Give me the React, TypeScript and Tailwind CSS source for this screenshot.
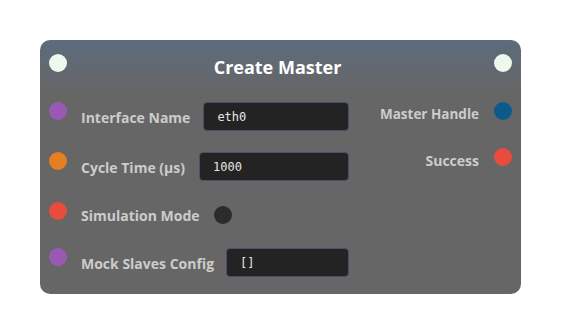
import React from "react"

const labelFont = { fontFamily: '"Open Sans", "Liberation Sans", Arial, sans-serif' }
const monoFont = { fontFamily: '"DejaVu Sans Mono", "Liberation Mono", monospace' }

function Dot({ color }: { color: string }) {
  return <div className={`w-[18px] h-[18px] rounded-full shrink-0 ${color}`} />
}

function TextInput({ value }: { value: string }) {
  return (
    <div
      className="flex-1 h-[29px] flex items-center pl-[13px] rounded-[4px] bg-[#232323] border border-[#44546a] text-[12px] text-[#e6e6e6]"
      style={monoFont}
    >
      {value}
    </div>
  )
}

export default function App() {
  return (
    <div className="w-[561px] h-[334px] bg-white pt-[40px] pl-[40px]" style={labelFont}>
      <div className="w-[481px] h-[254px] rounded-[10px] bg-[linear-gradient(to_bottom,#5d6b7d,#666666_52px)] pt-[14px] px-[9px]">
        {/* header */}
        <div className="flex items-start h-[18px]">
          <Dot color="bg-[#eef8ec]" />
          <div className="flex-1 text-center text-[18px] leading-[18px] font-bold text-white pt-[4px] pr-[6px]">
            Create Master
          </div>
          <Dot color="bg-[#eef8ec]" />
        </div>

        {/* slots */}
        <div className="flex mt-[30px]">
          <div className="w-[300px] flex flex-col">
            <div className="flex items-start gap-[14px]">
              <Dot color="bg-[#9b59b6]" />
              <div className="flex-1 flex items-center gap-[13px] h-[29px]">
                <span className="text-[14px] leading-[18px] font-bold text-[#cccccc] pt-[3px]">Interface Name</span>
                <TextInput value="eth0" />
              </div>
            </div>
            <div className="flex items-start gap-[14px] mt-[21px]">
              <Dot color="bg-[#e67e22]" />
              <div className="flex-1 flex items-center gap-[14px] h-[29px]">
                <span className="text-[14px] leading-[18px] font-bold text-[#cccccc] pt-[3px]">Cycle Time (µs)</span>
                <TextInput value="1000" />
              </div>
            </div>
            <div className="flex items-start gap-[14px] mt-[21px]">
              <Dot color="bg-[#e74c3c]" />
              <div className="flex-1 flex items-center gap-[14px] h-[26px]">
                <span className="text-[14px] leading-[18px] font-bold text-[#cccccc] pt-[2px]">Simulation Mode</span>
                <div className="w-[18px] h-[18px] rounded-full bg-[#2b2b2b]" />
              </div>
            </div>
            <div className="flex items-start gap-[14px] mt-[20px]">
              <Dot color="bg-[#9b59b6]" />
              <div className="flex-1 flex items-center gap-[12px] h-[29px]">
                <span className="text-[14px] leading-[18px] font-bold text-[#cccccc] pt-[3px]">Mock Slaves Config</span>
                <TextInput value="[]" />
              </div>
            </div>
          </div>

          <div className="flex-1 flex flex-col items-end">
            <div className="flex items-start gap-[15px]">
              <span className="text-[13.5px] leading-[18px] font-bold text-[#cccccc] mt-[3px]">Master Handle</span>
              <Dot color="bg-[#0b5a8a]" />
            </div>
            <div className="flex items-start gap-[15px] mt-[25px]">
              <span className="text-[14px] leading-[18px] font-bold text-[#cccccc] mt-[4px]">Success</span>
              <Dot color="bg-[#e74c3c]" />
            </div>
          </div>
        </div>
      </div>
    </div>
  )
}
